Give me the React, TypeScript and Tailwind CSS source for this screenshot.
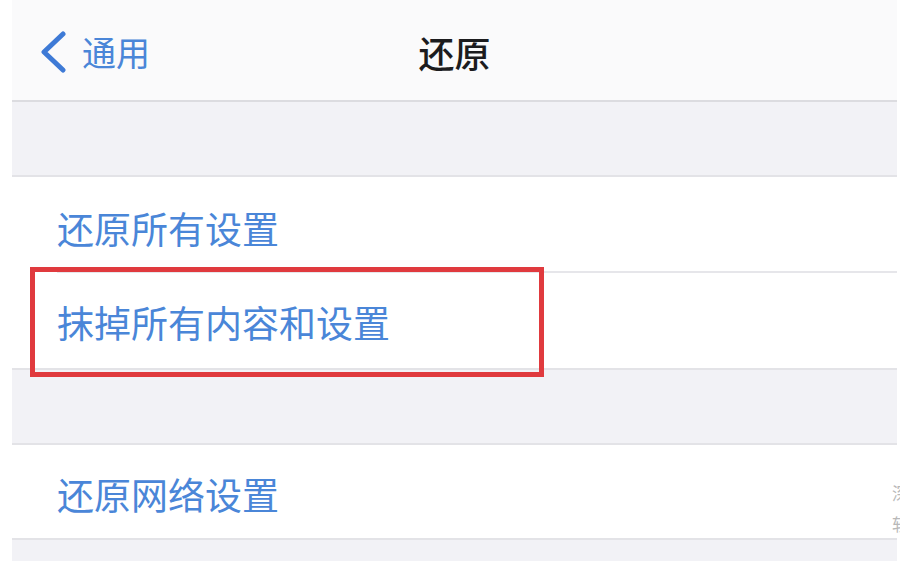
import React from "react";

const font = { fontFamily: '"Noto Sans CJK SC", "Noto Sans", sans-serif' };

export default function App() {
  return (
    <div
      className="relative w-[900px] h-[561px] overflow-hidden bg-white"
      style={font}
    >
      <div className="ml-[12px] w-[885px] h-full flex flex-col bg-[#f2f2f6]">
        {/* Nav bar */}
        <div className="h-[102px] shrink-0 bg-[#fafafb] grid grid-cols-[1fr_auto_1fr] items-center border-b-2 border-[#dcdce0]">
          <div className="flex items-center pl-[26px] pt-[4px]">
            <svg width="30" height="42" viewBox="0 0 30 42" className="shrink-0">
              <path
                d="M25 3 L6 21 L25 39"
                fill="none"
                stroke="#3e7ad6"
                strokeWidth="5"
                strokeLinecap="round"
                strokeLinejoin="round"
              />
            </svg>
            <span className="ml-[14px] text-[34px] leading-none text-[#4a86d8]">通用</span>
          </div>
          <div className="text-[36px] leading-none font-medium text-[#1c1c1e] pt-[4px]">还原</div>
          <div />
        </div>

        {/* gray spacer */}
        <div className="h-[75px] shrink-0 border-b-2 border-[#e3e3e7]" />

        {/* group 1 */}
        <div className="bg-white shrink-0">
          <div className="h-[94px] flex items-center pl-[45px] pt-[8px]">
            <span className="text-[37px] leading-none text-[#4a86d8]">还原所有设置</span>
          </div>
          <div className="ml-[45px] h-[2px] bg-[#e6e6ea]" />
          <div className="h-[95px] flex items-center pl-[45px] pt-[4px]">
            <span className="text-[37px] leading-none text-[#4a86d8]">抹掉所有内容和设置</span>
          </div>
        </div>

        {/* gray spacer */}
        <div className="h-[77px] shrink-0 border-t-2 border-b-2 border-[#e3e3e7]" />

        {/* group 2 */}
        <div className="bg-white shrink-0">
          <div className="h-[93px] flex items-center pl-[45px] pt-[6px]">
            <span className="text-[37px] leading-none text-[#4a86d8]">还原网络设置</span>
          </div>
        </div>
        <div className="flex-1 border-t-2 border-[#e3e3e7]" />
      </div>

      {/* red highlight box */}
      <div className="absolute left-[30px] top-[267px] w-[514px] h-[110px] border-[5px] border-[#e03a3e]" />

      {/* cut-off watermark */}
      <div className="absolute left-[892px] top-[484px] flex flex-col gap-[14px] text-[17px] leading-none text-[#b8b8b8]">
        <span>深</span>
        <span>软</span>
      </div>
    </div>
  );
}
